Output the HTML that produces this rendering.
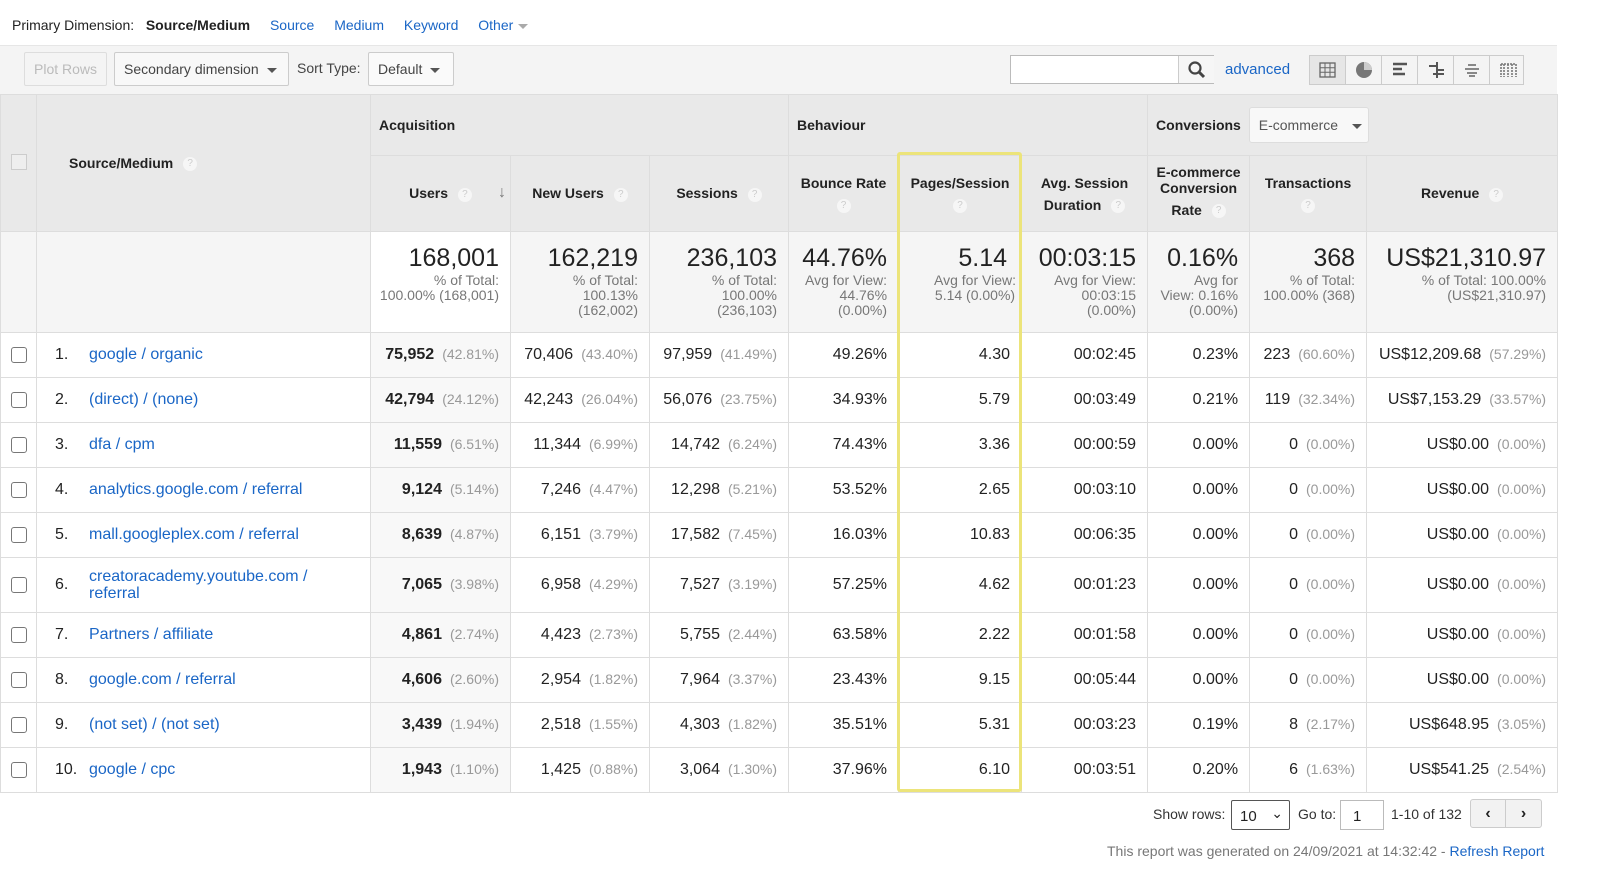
<!DOCTYPE html>
<html><head><meta charset="utf-8"><style>
*{box-sizing:border-box;margin:0;padding:0}
body{width:1600px;height:888px;background:#fff;font-family:"Liberation Sans",Arial,sans-serif;color:#222;position:relative;overflow:hidden}
.a{position:absolute}
.lnk{color:#1a66c6}
.top{top:17px;left:12px;font-size:14px;white-space:nowrap}
.bar{top:45px;left:0;width:1557px;height:49px;background:#f4f4f4;border-top:1px solid #e6e6e6}
.btn{position:absolute;height:34px;border:1px solid #ccc;border-radius:2px;background:#f8f8f8;font-size:14px;line-height:32px;padding:0 9px;color:#444}
.caret{display:inline-block;width:0;height:0;border-left:5px solid transparent;border-right:5px solid transparent;border-top:5px solid #555;vertical-align:middle;margin-left:8px}
table{position:absolute;top:94px;left:0;border-collapse:collapse;table-layout:fixed;width:1557px;font-size:16px}
td,th{border:1px solid #ddd;overflow:hidden;white-space:nowrap}
th{background:#e9e9e9;font-size:14px;font-weight:bold;color:#222}
.q{display:inline-block;width:14px;height:14px;border-radius:50%;background:#f6f6f6;color:#ccc;font-size:10px;line-height:14px;text-align:center;font-weight:normal;vertical-align:middle;margin-left:6px}
.tot td{background:#f5f5f5;text-align:right;vertical-align:top;padding:12px 11px 0 4px;color:#777;font-size:14px;line-height:15px;white-space:normal}
.tot td b{display:block;font-weight:normal;color:#222;font-size:25px;line-height:28px;margin-bottom:1px}
.r td{text-align:right;padding:0 11px;height:45px}
.r td.u{background:#f8f8f8}
.r td.u b{font-weight:bold}
.p{color:#999;font-size:14px;margin-left:8px}
.r td.s{text-align:left;padding-left:18px}
.r td.c{padding:0;text-align:center}
.cb{display:inline-block;width:16px;height:16px;border:1.5px solid #777;border-radius:3px;vertical-align:middle}
.n{display:inline-block;width:34px;text-align:left}
</style></head><body>
<div class="a top">Primary Dimension:&nbsp;&nbsp; <b style="font-weight:bold">Source/Medium</b> <span class="lnk" style="margin-left:16px">Source</span> <span class="lnk" style="margin-left:16px">Medium</span> <span class="lnk" style="margin-left:16px">Keyword</span> <span class="lnk" style="margin-left:16px">Other</span><span class="caret" style="border-top-color:#aaa;margin-left:5px"></span></div>
<div class="a bar"></div>
<div class="btn" style="left:24px;top:52px;color:#bbb;background:#f4f4f4;border-color:#ddd">Plot Rows</div>
<div class="btn" style="left:114px;top:52px;width:175px">Secondary dimension<span class="caret"></span></div>
<div class="a" style="left:297px;top:60px;font-size:14px;color:#444">Sort Type:</div>
<div class="btn" style="left:368px;top:52px;width:86px;background:#fafafa">Default<span class="caret"></span></div>
<div class="a" style="left:1010px;top:55px;width:204px;height:29px;border:1px solid #bbb;background:#fff"><div class="a" style="left:167px;top:0;width:36px;height:27px;border-left:1px solid #ccc;background:#f6f6f6">
<svg width="36" height="27"><circle cx="16" cy="12" r="5.5" stroke="#444" stroke-width="2.2" fill="none"/><line x1="20" y1="16" x2="25" y2="21" stroke="#444" stroke-width="3"/></svg></div></div>
<div class="a lnk" style="left:1225px;top:61px;font-size:15px">advanced</div>
<div class="a" style="left:1309px;top:55px;width:215px;height:30px;border:1px solid #ccc;background:#f4f4f4;display:flex">
<div style="width:36px;border-right:1px solid #ccc;background:#e6e6e6"><svg width="36" height="28"><rect x="10" y="7" width="15" height="14" fill="none" stroke="#666" stroke-width="1.3"/><path d="M15 7v14M20 7v14M10 11.7h15M10 16.3h15" stroke="#666" stroke-width="1"/></svg></div>
<div style="width:36px;border-right:1px solid #ccc"><svg width="36" height="28"><circle cx="18" cy="14" r="8" fill="#777"/><path d="M18 14V6A8 8 0 0 1 26 14Z" fill="#ccc"/></svg></div>
<div style="width:36px;border-right:1px solid #ccc"><svg width="36" height="28"><path d="M11 8h14M11 13h9M11 18h12" stroke="#555" stroke-width="2.5"/></svg></div>
<div style="width:36px;border-right:1px solid #ccc"><svg width="36" height="28"><path d="M11 10h8M19 6v16M19 14h7M15 18h11" stroke="#555" stroke-width="2"/></svg></div>
<div style="width:36px;border-right:1px solid #ccc"><svg width="36" height="28"><path d="M14 9h8M11 13h14M13 17h10M15 20h6" stroke="#888" stroke-width="2"/></svg></div>
<div style="width:36px"><svg width="36" height="28"><path d="M11 8v13M14 8v13M18 8v13M22 8v13M26 8v13M11 8h15" stroke="#777" stroke-width="1.6" stroke-dasharray="2 1"/></svg></div>
</div>
<table>
<colgroup><col style="width:36px"><col style="width:334px"><col style="width:140px"><col style="width:139px"><col style="width:139px"><col style="width:110px"><col style="width:123px"><col style="width:126px"><col style="width:102px"><col style="width:117px"><col style="width:191px"></colgroup>
<tr style="height:61px">
<th rowspan="2" style="vertical-align:middle"><span style="display:inline-block;width:16px;height:16px;border:1px solid #ccc;background:#eee"></span></th>
<th rowspan="2" style="text-align:left;padding-left:32px">Source/Medium <span class="q">?</span></th>
<th colspan="3" style="text-align:left;padding-left:8px">Acquisition</th>
<th colspan="3" style="text-align:left;padding-left:8px">Behaviour</th>
<th colspan="3" style="text-align:left;padding-left:8px">Conversions <span style="display:inline-block;margin-left:4px;width:120px;height:36px;border:1px solid #ddd;border-radius:3px;background:#f8f8f8;font-weight:normal;line-height:34px;color:#555;padding-left:9px">E-commerce<span class="caret" style="margin-left:14px"></span></span></th>
</tr>
<tr style="height:76px">
<th style="position:relative">Users <span class="q">?</span><span style="position:absolute;right:4px;top:28px;color:#777;font-size:16px">&#8595;</span></th>
<th>New Users <span class="q">?</span></th>
<th>Sessions <span class="q">?</span></th>
<th style="line-height:22px">Bounce Rate<br><span class="q" style="margin:0">?</span></th>
<th style="line-height:22px">Pages/Session<br><span class="q" style="margin:0">?</span></th>
<th style="line-height:22px">Avg. Session<br>Duration <span class="q">?</span></th>
<th style="line-height:16px">E-commerce<br>Conversion<br><span style="line-height:28px">Rate</span> <span class="q">?</span></th>
<th style="line-height:22px">Transactions<br><span class="q" style="margin:0">?</span></th>
<th>Revenue <span class="q">?</span></th>
</tr>
<tr class="tot" style="height:101px">
<td></td><td></td>
<td style="background:#fff"><b>168,001</b>% of Total:<br>100.00% (168,001)</td>
<td><b>162,219</b>% of Total:<br>100.13%<br>(162,002)</td>
<td><b>236,103</b>% of Total:<br>100.00%<br>(236,103)</td>
<td><b>44.76%</b>Avg for View:<br>44.76%<br>(0.00%)</td>
<td style="text-align:center;padding-left:30px;padding-right:0"><b style="text-align:right;padding-right:14px">5.14</b>Avg for View:<br>5.14 (0.00%)</td>
<td><b>00:03:15</b>Avg for View:<br>00:03:15<br>(0.00%)</td>
<td><b>0.16%</b>Avg for<br>View: 0.16%<br>(0.00%)</td>
<td><b>368</b>% of Total:<br>100.00% (368)</td>
<td><b>US$21,310.97</b>% of Total: 100.00%<br>(US$21,310.97)</td>
</tr>
<tr class="r"><td class="c"><span class="cb"></span></td><td class="s"><span class="n">1.</span><span class="lnk">google / organic</span></td><td class="u"><b>75,952</b><span class="p">(42.81%)</span></td><td>70,406<span class="p">(43.40%)</span></td><td>97,959<span class="p">(41.49%)</span></td><td>49.26%</td><td>4.30</td><td>00:02:45</td><td>0.23%</td><td>223<span class="p">(60.60%)</span></td><td>US$12,209.68<span class="p">(57.29%)</span></td></tr>
<tr class="r"><td class="c"><span class="cb"></span></td><td class="s"><span class="n">2.</span><span class="lnk">(direct) / (none)</span></td><td class="u"><b>42,794</b><span class="p">(24.12%)</span></td><td>42,243<span class="p">(26.04%)</span></td><td>56,076<span class="p">(23.75%)</span></td><td>34.93%</td><td>5.79</td><td>00:03:49</td><td>0.21%</td><td>119<span class="p">(32.34%)</span></td><td>US$7,153.29<span class="p">(33.57%)</span></td></tr>
<tr class="r"><td class="c"><span class="cb"></span></td><td class="s"><span class="n">3.</span><span class="lnk">dfa / cpm</span></td><td class="u"><b>11,559</b><span class="p">(6.51%)</span></td><td>11,344<span class="p">(6.99%)</span></td><td>14,742<span class="p">(6.24%)</span></td><td>74.43%</td><td>3.36</td><td>00:00:59</td><td>0.00%</td><td>0<span class="p">(0.00%)</span></td><td>US$0.00<span class="p">(0.00%)</span></td></tr>
<tr class="r"><td class="c"><span class="cb"></span></td><td class="s"><span class="n">4.</span><span class="lnk">analytics.google.com / referral</span></td><td class="u"><b>9,124</b><span class="p">(5.14%)</span></td><td>7,246<span class="p">(4.47%)</span></td><td>12,298<span class="p">(5.21%)</span></td><td>53.52%</td><td>2.65</td><td>00:03:10</td><td>0.00%</td><td>0<span class="p">(0.00%)</span></td><td>US$0.00<span class="p">(0.00%)</span></td></tr>
<tr class="r"><td class="c"><span class="cb"></span></td><td class="s"><span class="n">5.</span><span class="lnk">mall.googleplex.com / referral</span></td><td class="u"><b>8,639</b><span class="p">(4.87%)</span></td><td>6,151<span class="p">(3.79%)</span></td><td>17,582<span class="p">(7.45%)</span></td><td>16.03%</td><td>10.83</td><td>00:06:35</td><td>0.00%</td><td>0<span class="p">(0.00%)</span></td><td>US$0.00<span class="p">(0.00%)</span></td></tr>
<tr class="r" style="height:55px"><td class="c"><span class="cb"></span></td><td class="s"><span class="n" style="vertical-align:middle">6.</span><span class="lnk" style="display:inline-block;vertical-align:middle;line-height:17px">creatoracademy.youtube.com /<br>referral</span></td><td class="u"><b>7,065</b><span class="p">(3.98%)</span></td><td>6,958<span class="p">(4.29%)</span></td><td>7,527<span class="p">(3.19%)</span></td><td>57.25%</td><td>4.62</td><td>00:01:23</td><td>0.00%</td><td>0<span class="p">(0.00%)</span></td><td>US$0.00<span class="p">(0.00%)</span></td></tr>
<tr class="r"><td class="c"><span class="cb"></span></td><td class="s"><span class="n">7.</span><span class="lnk">Partners / affiliate</span></td><td class="u"><b>4,861</b><span class="p">(2.74%)</span></td><td>4,423<span class="p">(2.73%)</span></td><td>5,755<span class="p">(2.44%)</span></td><td>63.58%</td><td>2.22</td><td>00:01:58</td><td>0.00%</td><td>0<span class="p">(0.00%)</span></td><td>US$0.00<span class="p">(0.00%)</span></td></tr>
<tr class="r"><td class="c"><span class="cb"></span></td><td class="s"><span class="n">8.</span><span class="lnk">google.com / referral</span></td><td class="u"><b>4,606</b><span class="p">(2.60%)</span></td><td>2,954<span class="p">(1.82%)</span></td><td>7,964<span class="p">(3.37%)</span></td><td>23.43%</td><td>9.15</td><td>00:05:44</td><td>0.00%</td><td>0<span class="p">(0.00%)</span></td><td>US$0.00<span class="p">(0.00%)</span></td></tr>
<tr class="r"><td class="c"><span class="cb"></span></td><td class="s"><span class="n">9.</span><span class="lnk">(not set) / (not set)</span></td><td class="u"><b>3,439</b><span class="p">(1.94%)</span></td><td>2,518<span class="p">(1.55%)</span></td><td>4,303<span class="p">(1.82%)</span></td><td>35.51%</td><td>5.31</td><td>00:03:23</td><td>0.19%</td><td>8<span class="p">(2.17%)</span></td><td>US$648.95<span class="p">(3.05%)</span></td></tr>
<tr class="r"><td class="c"><span class="cb"></span></td><td class="s"><span class="n">10.</span><span class="lnk">google / cpc</span></td><td class="u"><b>1,943</b><span class="p">(1.10%)</span></td><td>1,425<span class="p">(0.88%)</span></td><td>3,064<span class="p">(1.30%)</span></td><td>37.96%</td><td>6.10</td><td>00:03:51</td><td>0.20%</td><td>6<span class="p">(1.63%)</span></td><td>US$541.25<span class="p">(2.54%)</span></td></tr>
</table>
<div class="a" style="left:897px;top:152px;width:125px;height:640px;border:3px solid #ece47a;border-radius:3px"></div>
<div class="a" style="left:1153px;top:806px;font-size:14px;color:#333">Show rows:</div>
<div class="a" style="left:1231px;top:800px;width:59px;height:30px;border:1px solid #555;border-radius:2px;font-size:15px;padding:7px 0 0 8px">10<span style="position:absolute;right:6px;top:4px;font-size:14px">&#8964;</span></div>
<div class="a" style="left:1298px;top:806px;font-size:14px;color:#333">Go to:</div>
<div class="a" style="left:1340px;top:800px;width:44px;height:30px;border:1px solid #bbb;font-size:15px;padding:7px 0 0 12px">1</div>
<div class="a" style="left:1391px;top:806px;font-size:14px;color:#333">1-10 of 132</div>
<div class="a" style="left:1470px;top:799px;width:72px;height:29px;border:1px solid #ccc;border-radius:3px;background:#f2f2f2;display:flex;font-weight:bold;font-size:16px;line-height:27px"><div style="width:36px;text-align:center;border-right:1px solid #ccc">&#8249;</div><div style="width:36px;text-align:center">&#8250;</div></div>
<div class="a" style="left:1107px;top:843px;font-size:14px;color:#777">This report was generated on 24/09/2021 at 14:32:42 - <span class="lnk">Refresh Report</span></div>
</body></html>
